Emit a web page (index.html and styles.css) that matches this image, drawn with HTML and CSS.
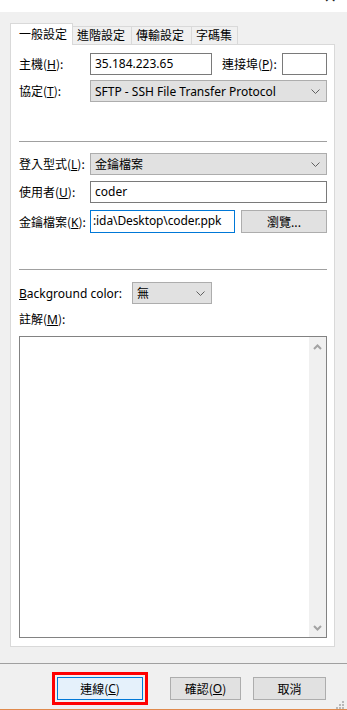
FILE: index.html
```html
<!DOCTYPE html>
<html lang="zh-Hant">
<head>
<meta charset="utf-8">
<title>站台設定</title>
<link rel="stylesheet" href="styles.css">
</head>
<body>
<div class="titlebar"><span class="close">×</span></div>
<div class="tabs">
  <div class="tab active">一般設定</div>
  <div class="tab">進階設定</div>
  <div class="tab">傳輸設定</div>
  <div class="tab">字碼集</div>
</div>
<div class="panel">
  <div class="row r1">
    <span class="label">主機(<u>H</u>):</span>
    <div class="input host">35.184.223.65</div>
    <span class="label port-label">連接埠(<u>P</u>):</span>
    <div class="input port"></div>
  </div>
  <div class="row r2">
    <span class="label">協定(<u>T</u>):</span>
    <div class="select wide"><span>SFTP - SSH File Transfer Protocol</span><svg class="chev" width="9" height="5" viewBox="0 0 9 5"><polyline points="0.5,0.5 4.5,4.5 8.5,0.5" fill="none" stroke="#606060" stroke-width="1"/></svg></div>
  </div>
  <div class="sep s1"></div>
  <div class="row r3">
    <span class="label">登入型式(<u>L</u>):</span>
    <div class="select wide"><span>金鑰檔案</span><svg class="chev" width="9" height="5" viewBox="0 0 9 5"><polyline points="0.5,0.5 4.5,4.5 8.5,0.5" fill="none" stroke="#606060" stroke-width="1"/></svg></div>
  </div>
  <div class="row r4">
    <span class="label">使用者(<u>U</u>):</span>
    <div class="input wide">coder</div>
  </div>
  <div class="row r5">
    <span class="label">金鑰檔案(<u>K</u>):</span>
    <div class="input keyfile">:ida\Desktop\coder.ppk</div>
    <div class="button browse">瀏覽...</div>
  </div>
  <div class="sep s2"></div>
  <div class="row r6">
    <span class="label bglabel"><u>B</u>ackground color:</span>
    <div class="select color"><span>無</span><svg class="chev" width="9" height="5" viewBox="0 0 9 5"><polyline points="0.5,0.5 4.5,4.5 8.5,0.5" fill="none" stroke="#606060" stroke-width="1"/></svg></div>
  </div>
  <div class="note-label">註解(<u>M</u>):</div>
  <div class="textarea">
    <div class="ta-body"></div>
    <div class="scrollbar">
      <svg width="9" height="6" viewBox="0 0 9 6"><polyline points="1,5 4.5,1.5 8,5" fill="none" stroke="#a3a3a3" stroke-width="2"/></svg>
      <svg width="9" height="6" viewBox="0 0 9 6"><polyline points="1,1 4.5,4.5 8,1" fill="none" stroke="#a3a3a3" stroke-width="2"/></svg>
    </div>
  </div>
</div>
<div class="footer-sep"></div>
<div class="footer">
  <div class="focus-ring"><div class="button connect">連線(<u>C</u>)</div></div>
  <div class="button ok">確認(<u>O</u>)</div>
  <div class="button cancel">取消</div>
</div>
<div class="bottom">
  <div class="grip">
    <svg width="10" height="8" viewBox="0 0 10 8"><g fill="#b8b8b8"><rect x="7" y="0" width="2" height="2"/><rect x="4" y="3" width="2" height="2"/><rect x="7" y="3" width="2" height="2"/><rect x="1" y="6" width="2" height="2"/><rect x="4" y="6" width="2" height="2"/><rect x="7" y="6" width="2" height="2"/></g></svg>
  </div>
</div>
</body>
</html>
```
FILE: styles.css
```css
* { box-sizing: border-box; }
html, body { margin: 0; padding: 0; }
body {
  width: 347px;
  height: 710px;
  overflow: hidden;
  background: #f0f0f0;
  font-family: "Noto Sans", "Noto Sans CJK TC", sans-serif;
  font-size: 12px;
  color: #000;
  position: relative;
}
u { text-decoration: underline; text-underline-offset: 1px; }

.titlebar {
  height: 12px;
  background: #fff;
  overflow: hidden;
  display: flex;
  justify-content: flex-end;
  padding-right: 10px;
}
.close {
  font-family: "DejaVu Sans", sans-serif;
  font-size: 16px;
  line-height: 16px;
  margin-top: -11px;
  color: #222;
}

.tabs {
  display: flex;
  align-items: flex-end;
  margin: 11px 0 0 10px;
  height: 21px;
}
.tab {
  height: 18px;
  line-height: 16px;
  padding: 0 4px;
  border: 1px solid #d9d9d9;
  border-bottom: none;
  border-left: none;
  background: #f0f0f0;
  font-family: "Noto Sans CJK TC", sans-serif;
  font-size: 12px;
}
.tab:nth-child(2) { width: 59px; }
.tab:nth-child(3) { width: 60px; }
.tab:nth-child(4) { width: 46px; }
.tab.active {
  width: 63px;
  line-height: 19px;
  background: #fff;
  border-left: 1px solid #d9d9d9;
  padding-left: 8px;
  position: relative;
  z-index: 1;
  margin-bottom: -1px;
  height: 22px;
}

.panel {
  width: 325px;
  height: 603px;
  margin-left: 10px;
  background: #fff;
  border: 1px solid #d9d9d9;
  padding: 8px 7px 0 8px;
}

.row {
  display: flex;
  align-items: center;
  height: 22px;
}
.label {
  width: 71px;
  flex: none;
  font-family: "Noto Sans CJK TC", sans-serif;
  white-space: nowrap;
}
.label u, .note-label u, .button u { font-family: "Noto Sans", sans-serif; }
.port-label { width: 60px; margin-left: 10px; }
.bglabel { width: 113px; font-family: "Noto Sans", sans-serif; }

.input {
  height: 22px;
  border: 1px solid #7a7a7a;
  background: #fff;
  padding: 0 4px;
  line-height: 19px;
  white-space: nowrap;
  overflow: hidden;
  font-size: 12px;
}
.host { width: 122px; }
.port { width: 45px; }
.wide { width: 237px; }
.keyfile { width: 145px; border-color: #0078d7; height: 23px; padding: 0 2px; letter-spacing: -0.1px; }

.select {
  height: 22px;
  border: 1px solid #adadad;
  background: #e1e1e1;
  display: flex;
  align-items: center;
  justify-content: space-between;
  padding: 0 6px 0 4px;
  font-size: 12px;
  white-space: nowrap;
}
.select span { font-family: "Noto Sans", "Noto Sans CJK TC", sans-serif; }
.color { width: 80px; }
.chev { flex: none; }

.button {
  height: 23px;
  border: 1px solid #adadad;
  background: #e1e1e1;
  display: flex;
  align-items: center;
  justify-content: center;
  font-family: "Noto Sans CJK TC", sans-serif;
}
.browse { width: 86px; margin-left: 6px; }

.r2 { margin-top: 5px; }
.sep { height: 1px; background: #a0a0a0; width: 308px; }
.s1 { margin-top: 39px; }
.r3 { margin-top: 11px; }
.r4 { margin-top: 6px; }
.r5 { margin-top: 7px; height: 23px; }
.s2 { margin-top: 36px; }
.r6 { margin-top: 12px; }

.note-label {
  margin-top: 7px;
  height: 16px;
  line-height: 16px;
  font-family: "Noto Sans CJK TC", sans-serif;
}
.textarea {
  margin-top: 9px;
  width: 308px;
  height: 302px;
  border: 1px solid #828282;
  display: flex;
  background: #fff;
}
.ta-body { flex: 1; }
.scrollbar {
  width: 17px;
  background: #f0f0f0;
  display: flex;
  flex-direction: column;
  justify-content: space-between;
  align-items: center;
  padding: 7px 0 6px;
}

.footer-sep {
  margin-top: 16px;
  height: 1px;
  background: #a0a0a0;
}
.footer {
  display: flex;
  align-items: center;
  height: 33px;
  margin-top: 8px;
  padding-left: 52px;
}
.focus-ring {
  width: 96px;
  height: 33px;
  border: 3px solid #ff0000;
  padding: 2px;
}
.connect {
  width: 86px;
  height: 23px;
  background: #e5f1fb;
  border-color: #0078d7;
}
.ok { width: 71px; margin-left: 22px; }
.cancel { width: 73px; margin-left: 12px; }

.bottom {
  position: relative;
  height: 5px;
  border-bottom: 1px solid #e08a4c;
}
.grip {
  position: absolute;
  right: 2px;
  bottom: 0;
  line-height: 0;
}
```
